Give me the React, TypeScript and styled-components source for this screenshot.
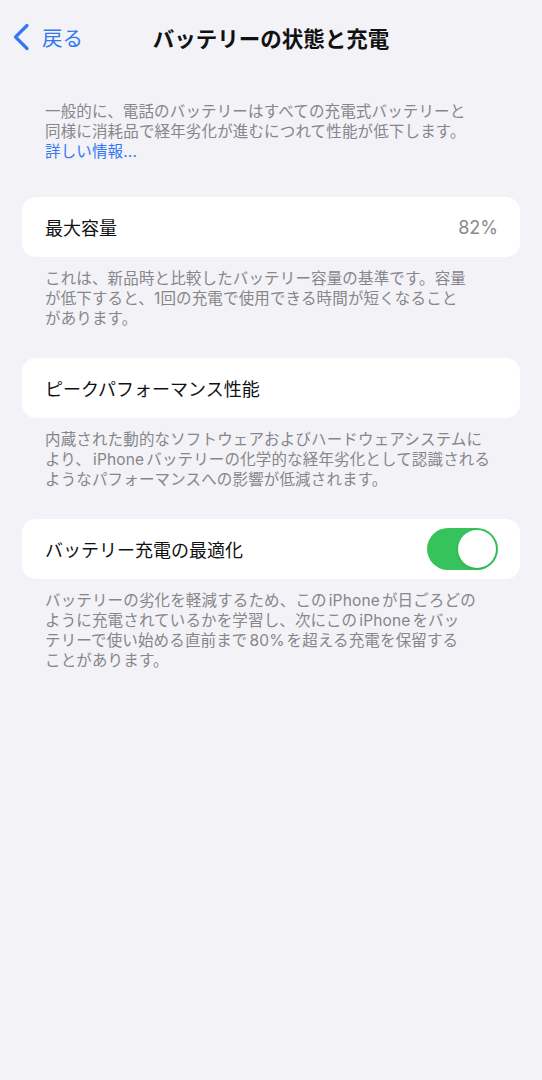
import React from "react";
import styled, { createGlobalStyle } from "styled-components";

const Global = createGlobalStyle`
  html, body { margin: 0; padding: 0; background: #f2f2f7; }
  body {
    font-family: "Inter", "Noto Sans CJK JP", "Noto Sans", sans-serif;
    -webkit-font-smoothing: antialiased;
  }
`;

const Page = styled.div`
  width: 542px;
  min-height: 1080px;
  background: #f2f2f7;
  box-sizing: border-box;
`;

const NavBar = styled.header`
  display: grid;
  grid-template-columns: 1fr auto 1fr;
  align-items: center;
  height: 74px;
  padding: 0 12px;
  box-sizing: border-box;
`;

const BackButton = styled.button`
  display: flex;
  align-items: center;
  gap: 12px;
  background: none;
  border: none;
  padding: 0;
  color: #3479f2;
  font-family: "Noto Sans CJK JP", sans-serif;
  font-size: 20.5px;
  cursor: pointer;
  justify-self: start;
`;

const Title = styled.h1`
  margin: 0;
  font-family: "Noto Sans CJK JP", sans-serif;
  font-size: 21.5px;
  font-weight: 700;
  color: #111;
  letter-spacing: 0;
`;

const Content = styled.main`
  padding: 28px 22px 0;
  display: flex;
  flex-direction: column;
`;

const Note = styled.p<{ $top?: number; $bottom?: number }>`
  margin: ${(p) => p.$top ?? 0}px 0 ${(p) => p.$bottom ?? 0}px;
  padding: 0 23px;
  font-size: 15.5px;
  line-height: 20px;
  letter-spacing: 0.15px;
  color: #86868b;
  font-family: "Inter", "Noto Sans CJK JP", sans-serif;
`;

const Latin = styled.span`
  margin: 0 2px;
`;

const Link = styled.a`
  color: #3479f2;
  text-decoration: none;
`;

const Card = styled.div`
  background: #ffffff;
  border-radius: 14px;
  height: 60px;
  display: flex;
  align-items: center;
  justify-content: space-between;
  padding: 0 22px 0 23px;
`;

const Label = styled.span`
  font-family: "Noto Sans CJK JP", sans-serif;
  font-size: 18px;
  color: #111;
`;

const Value = styled.span`
  font-family: "Inter", "Noto Sans CJK JP", sans-serif;
  font-size: 18px;
  color: #8a8a8e;
`;

const Track = styled.div<{ $on: boolean }>`
  width: 71px;
  height: 42px;
  border-radius: 21px;
  background: ${(p) => (p.$on ? "#37c35b" : "#e5e5ea")};
  display: flex;
  align-items: center;
  justify-content: ${(p) => (p.$on ? "flex-end" : "flex-start")};
  padding: 2px;
  box-sizing: border-box;
`;

const Knob = styled.div`
  width: 38px;
  height: 38px;
  border-radius: 50%;
  background: #fff;
  box-shadow: 0 1px 3px rgba(0, 0, 0, 0.15);
`;

const Chevron = () => (
  <svg width="18" height="28" viewBox="0 0 18 28" fill="none">
    <path
      d="M15 2.5 L3.5 14 L15 25.5"
      stroke="#3479f2"
      strokeWidth="3.2"
      strokeLinecap="round"
      strokeLinejoin="round"
    />
  </svg>
);

export default function App() {
  return (
    <Page>
      <Global />
      <NavBar>
        <BackButton>
          <Chevron />
          戻る
        </BackButton>
        <Title>バッテリーの状態と充電</Title>
        <span />
      </NavBar>
      <Content>
        <Note $bottom={35}>
          一般的に、電話のバッテリーはすべての充電式バッテリーと
          <br />
          同様に消耗品で経年劣化が進むにつれて性能が低下します。
          <br />
          <Link href="#">詳しい情報...</Link>
        </Note>

        <Card>
          <Label>最大容量</Label>
          <Value>82%</Value>
        </Card>
        <Note $top={12} $bottom={29}>
          これは、新品時と比較したバッテリー容量の基準です。容量
          <br />
          が低下すると、1回の充電で使用できる時間が短くなること
          <br />
          があります。
        </Note>

        <Card>
          <Label>ピークパフォーマンス性能</Label>
        </Card>
        <Note $top={12} $bottom={29}>
          内蔵された動的なソフトウェアおよびハードウェアシステムに
          <br />
          より、<Latin>iPhone</Latin>バッテリーの化学的な経年劣化として認識される
          <br />
          ようなパフォーマンスへの影響が低減されます。
        </Note>

        <Card>
          <Label>バッテリー充電の最適化</Label>
          <Track $on={true}>
            <Knob />
          </Track>
        </Card>
        <Note $top={12}>
          バッテリーの劣化を軽減するため、この<Latin>iPhone</Latin>が日ごろどの
          <br />
          ように充電されているかを学習し、次にこの<Latin>iPhone</Latin>をバッ
          <br />
          テリーで使い始める直前まで<Latin>80%</Latin>を超える充電を保留する
          <br />
          ことがあります。
        </Note>
      </Content>
    </Page>
  );
}
